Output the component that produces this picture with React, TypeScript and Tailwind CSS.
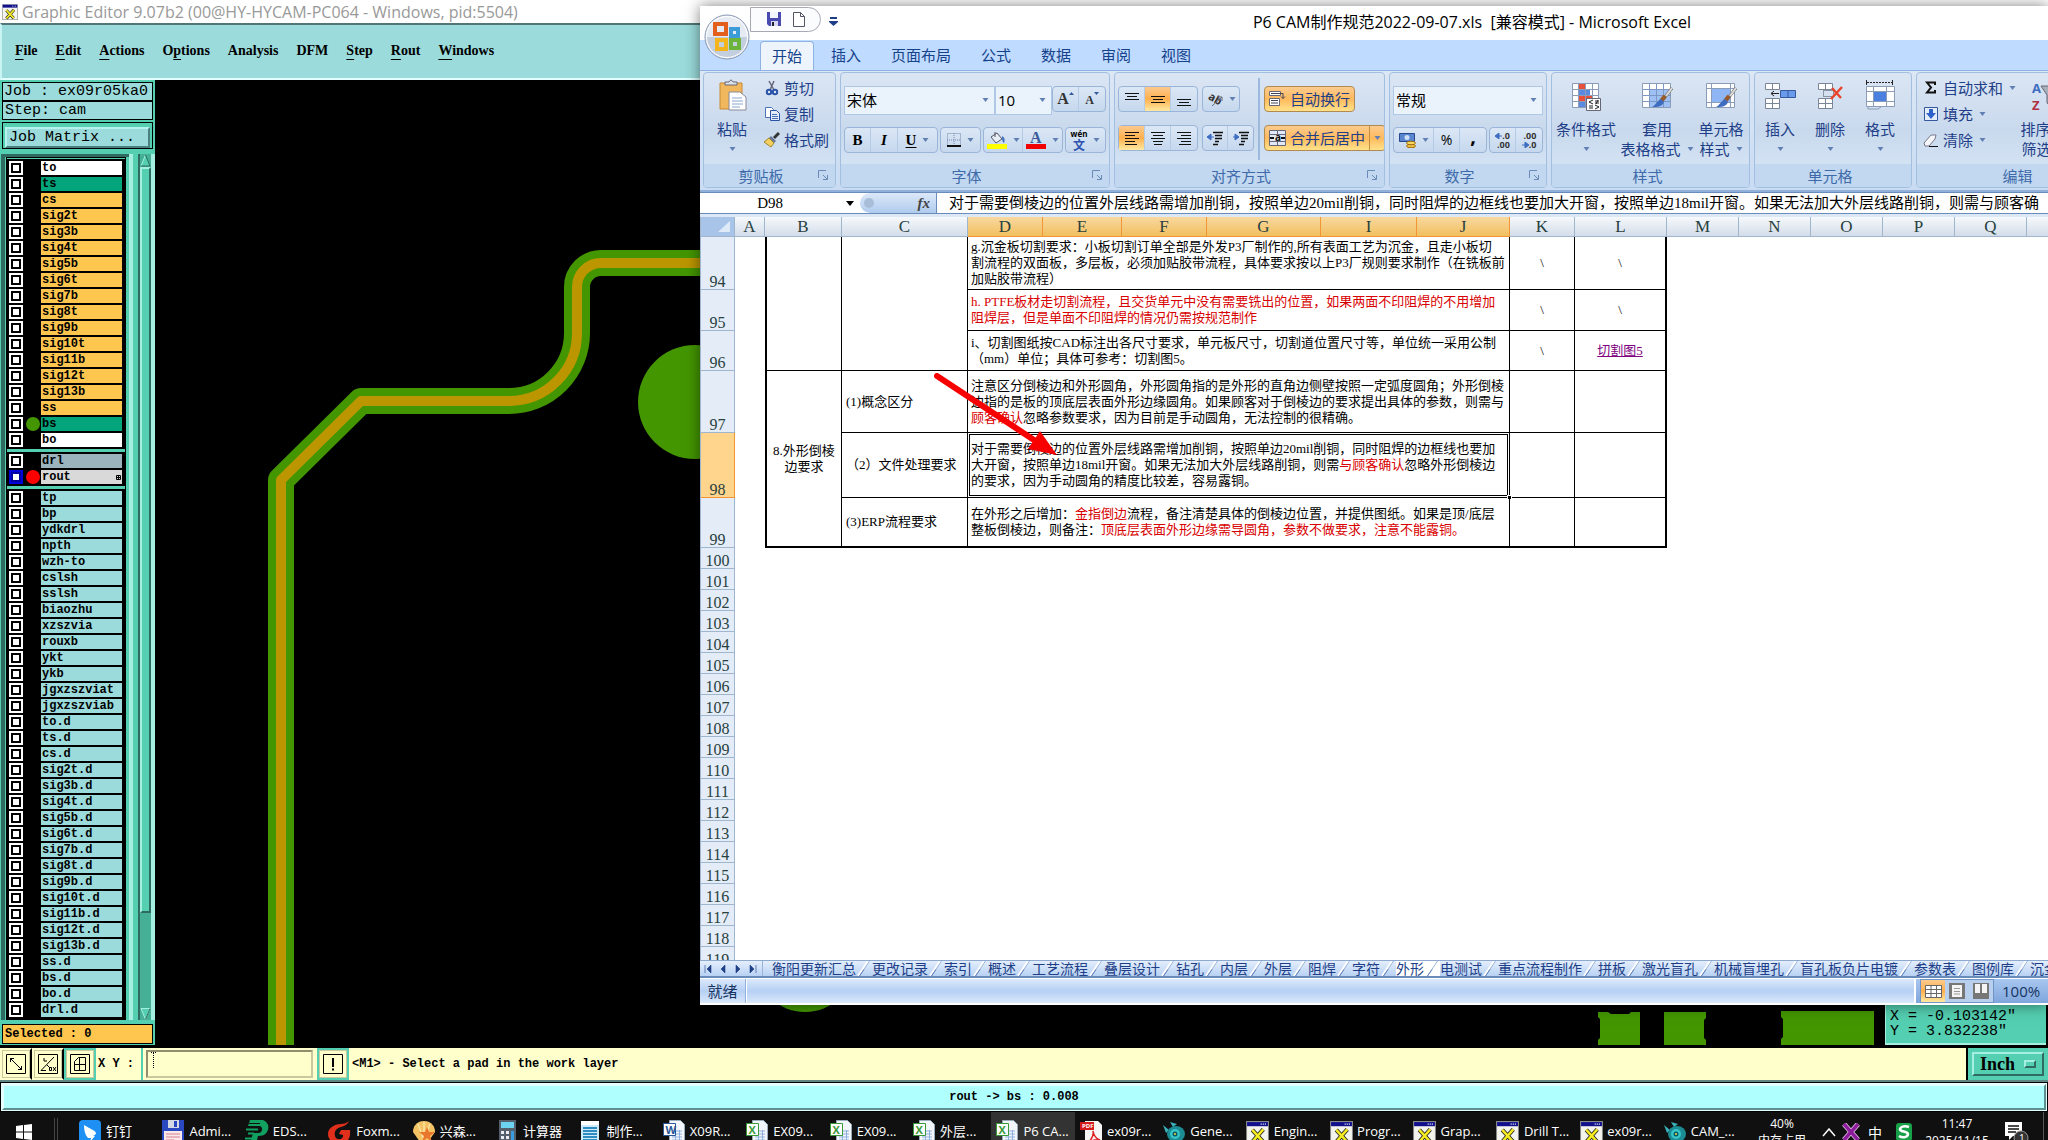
import React from "react";

const UI = "font-['Open_Sans','Noto_Sans_CJK_SC',sans-serif]";
const SONG = "font-['Liberation_Serif','Noto_Sans_CJK_SC',serif]";
const MONO = "font-['Liberation_Mono',monospace]";

/* ---------- layer list ---------- */

const WHITE = "bg-white";
const GREEN = "bg-[#02a47c]";
const ORANGE = "bg-[#ffc64f]";
const CYAN = "bg-[#9bdbdb]";

interface Layer {
    name: string;
    bg: string;
    dot?: string;
    active?: boolean;
}

const layerGroups: Layer[][] = [
    [
        { name: "to", bg: WHITE },
        { name: "ts", bg: GREEN },
        ...["cs", "sig2t", "sig3b", "sig4t", "sig5b", "sig6t", "sig7b", "sig8t", "sig9b", "sig10t", "sig11b", "sig12t", "sig13b", "ss"].map(
            (name) => ({ name, bg: ORANGE })
        ),
        { name: "bs", bg: GREEN, dot: "bg-[#439600]" },
        { name: "bo", bg: WHITE },
    ],
    [
        { name: "drl", bg: "bg-[#9ab3bd]" },
        { name: "rout", bg: "bg-[#d9d9d9]", dot: "bg-[#ff0000]", active: true },
    ],
    [
        "tp", "bp", "ydkdrl", "npth", "wzh-to", "cslsh", "sslsh", "biaozhu", "xzszvia", "rouxb", "ykt", "ykb",
        "jgxzszviat", "jgxzszviab", "to.d", "ts.d", "cs.d", "sig2t.d", "sig3b.d", "sig4t.d", "sig5b.d", "sig6t.d",
        "sig7b.d", "sig8t.d", "sig9b.d", "sig10t.d", "sig11b.d", "sig12t.d", "sig13b.d", "ss.d", "bs.d", "bo.d", "drl.d",
    ].map((name) => ({ name, bg: CYAN })),
];

const LayerRow: React.FC<{ layer: Layer }> = ({ layer }) => (
    <label className="flex h-4 items-center">
        <input
            type="checkbox"
            className={`ml-0.5 h-3.5 w-3.5 shrink-0 appearance-none border-2 bg-white ${
                layer.active ? "border-[#0000d8] shadow-[inset_0_0_0_2px_#00009c]" : "border-white shadow-[inset_0_0_0_2px_#000]"
            }`}
        />
        <span className="flex w-[18px] justify-center pl-0.5">
            {layer.dot && <span className={`h-3.5 w-3.5 shrink-0 rounded-full ${layer.dot}`} />}
        </span>
        <span className={`flex h-3.5 flex-1 mr-[3px] items-center justify-between pl-px text-[12px] leading-[14px] font-bold text-black ${MONO} ${layer.bg}`}>
            {layer.name}
            {layer.active && (
                <svg width="5" height="5" className="mr-px" viewBox="0 0 5 5">
                    <path d="M.5 .5h4v4h-4zM2.5 0v5M0 2.5h5" fill="none" stroke="#000" />
                </svg>
            )}
        </span>
    </label>
);

const SidePanel: React.FC = () => (
    <aside className={`flex w-[155px] shrink-0 flex-col bg-[#54cfb1] pt-0.5 pb-px text-black ${MONO}`}>
        <div className="mx-0.5 h-[19px] border border-black bg-[#9bdbdb] pl-px text-[15px] leading-[18px] whitespace-nowrap">Job : ex09r05ka0</div>
        <div className="mx-0.5 h-[19px] border border-black bg-[#9bdbdb] pl-0.5 text-[15px] leading-[18px]">Step: cam</div>
        <div className="mx-0.5 mt-0.5 h-[27px] border border-black p-0.5">
            <button className="h-full w-full border-2 border-t-[#b5f3ef] border-l-[#b5f3ef] border-r-[#4a8080] border-b-[#4a8080] bg-[#9bdbdb] pl-0.5 text-left text-[15px] leading-[17px]">
                Job Matrix ...
            </button>
        </div>
        <div className="mt-[5px] flex min-h-0 flex-1 border-l border-[#54cfb1]">
            <div className="flex flex-1 border-t-3 border-l-4 border-[#2f6b60]">
                <div className="ml-px flex flex-1 flex-col gap-[3px] border border-black pt-px">
                    {layerGroups.map((group, i) => (
                        <div key={i} className="border-y border-black bg-black">
                            {group.map((layer) => (
                                <LayerRow key={layer.name} layer={layer} />
                            ))}
                        </div>
                    ))}
                </div>
                <div className="w-[3px]" />
            </div>
            <div className="w-[9px] border-l-4 border-[#a5efe0] bg-[#54cfb1]" />
            <div className="flex w-[17px] flex-col border-r-4 border-l-2 border-l-[#2f6b60] border-r-[#a5efe0] bg-[#45b096]">
                <svg width="11" height="13" viewBox="0 0 11 13">
                    <path d="M5.500 1L1 12h9z" fill="#54cfb1" />
                    <path d="M5.500 1L1 12" stroke="#a5efe0" />
                    <path d="M5.500 1L10 12H1" fill="none" stroke="#2f6b60" />
                </svg>
                <div className="h-[746px] border-2 border-t-[#a5efe0] border-l-[#a5efe0] border-b-[#2f6b60] border-r-[#2f6b60] bg-[#54cfb1]" />
                <div className="flex-1" />
                <svg width="11" height="12" viewBox="0 0 11 12">
                    <path d="M1 .5h9L5.500 11.500z" fill="#54cfb1" stroke="#a5efe0" />
                    <path d="M10 .5l-4.500 11" stroke="#2f6b60" />
                </svg>
            </div>
        </div>
        <div className="mx-0.5 mt-1 h-5 border border-black bg-[#ffc64f] pl-0.5 text-[12px] leading-[18px] font-bold">Selected : 0</div>
    </aside>
);

/* ---------- graphic editor ---------- */

const editorMenu = [
    ["", "F", "ile"],
    ["", "E", "dit"],
    ["", "A", "ctions"],
    ["O", "p", "tions"],
    ["Analysis", "", ""],
    ["DFM", "", ""],
    ["", "S", "tep"],
    ["", "R", "out"],
    ["", "W", "indows"],
];

const XLogo: React.FC<{ size: number }> = ({ size }) => (
    <svg width={size} height={size} viewBox="0 0 22 22" className="shrink-0">
        <path d="M.5 .5h21v21H.5z" fill="#f4f4ee" stroke="#888" />
        <path d="M1 1h20v4H1z" fill="#10108c" />
        <path d="M14 3h1M16 3h1M18 3h1" stroke="#fff" />
        <path d="M6 8.500l10 11M16.500 8L6 20" stroke="#222" strokeWidth="4" />
        <path d="M6 8.500l10 11M16.500 8L6 20" stroke="#f4ec20" strokeWidth="2.400" />
    </svg>
);

const Canvas: React.FC = () => (
    <div className="relative min-w-0 flex-1 overflow-hidden bg-black">
        <svg className="block h-full w-full">
            <g transform="translate(-155 -80)">
                <g fill="none" strokeLinejoin="round">
                    <path d="M281 1045V480L361 401H509A68 68 0 0 0 577 333V287A24 24 0 0 1 601 263H760" stroke="#439600" strokeWidth="26" />
                    <path d="M281 1045V480L361 401H509A68 68 0 0 0 577 333V287A24 24 0 0 1 601 263H760" stroke="#bc9600" strokeWidth="10" />
                </g>
                <g fill="#439600">
                    <circle cx="695" cy="402" r="57" />
                    <circle cx="805" cy="962" r="50" />
                    <path d="M1598 1012h10l3 2h18l2-2h9v33h-42v-5l2-2v-19l-2-2z" />
                    <path d="M1664 1012h42v6l-2 2v18l2 2v5h-42z" />
                    <path d="M1781 1011h93v34h-93v-6l2-2v-18l-2-2z" />
                </g>
            </g>
        </svg>
        <div className={`absolute right-0.5 bottom-0 h-16 w-[161px] border-b-2 border-l border-[#a5efe0] bg-[#54cfb1] pt-7 pl-1 text-[15px] leading-[15px] whitespace-pre text-black ${MONO}`}>
            {'X = -0.103142"\nY = 3.832238"'}
        </div>
    </div>
);

const ToolButton: React.FC<{ label: string; teal?: boolean; children: React.ReactNode }> = ({ label, teal, children }) => (
    <button
        aria-label={label}
        className={`flex h-full w-8 shrink-0 items-center justify-center border-2 ${teal ? "border-[#54cfb1]" : "border-[#ffffcc] border-r-black"} bg-[#ffffcc]`}
    >
        <span className="flex border border-[#c9c9a0] p-[3px]">
            <svg width="20" height="20" viewBox="0 0 20 20" fill="none" stroke="#000">
                {children}
            </svg>
        </span>
    </button>
);

const Editor: React.FC = () => (
    <div className="flex min-h-0 flex-1 flex-col">
        <header className={`flex h-[23px] shrink-0 items-center gap-1 bg-white pl-0.5 text-[16px] text-[#999] ${UI}`}>
            <XLogo size={16} />
            <span>Graphic Editor 9.07b2 (00@HY-HYCAM-PC064 - Windows, pid:5504)</span>
        </header>
        <nav className="flex h-[57px] shrink-0 items-center gap-[18px] border-2 border-t-[#527676] border-l-[#c8f4f4] border-b-[#e4ffff] border-r-[#527676] bg-[#9bdbdb] pb-0.5 pl-[13px] font-['Liberation_Serif',serif] text-[14px] font-bold text-black">
            {editorMenu.map(([before, key, after]) => (
                <button key={before + key + after}>
                    {before}
                    <span className="underline underline-offset-4">{key}</span>
                    {after}
                </button>
            ))}
        </nav>
        <div className="flex min-h-0 flex-1">
            <SidePanel />
            <Canvas />
        </div>
        <div className={`flex h-[35px] shrink-0 items-stretch border-t-3 border-black bg-[#ffffcc] text-[12px] font-bold text-black ${MONO}`}>
            <ToolButton label="Snap to point">
                <path d="M.5 .5h19v19H.5zM4.500 4.500l11 11M4.500 8V4.500H8M15.500 12v3.500H12" />
            </ToolButton>
            <ToolButton label="Angle mode">
                <path d="M.5 .5h19v19H.5zM3 16.500L16 3M3 16.500h5M6 4v3h3M9 11l3 3M11.500 13.500h2v3h-2zM18 13l-3 4M15 13l3 4" />
            </ToolButton>
            <ToolButton label="Grid" teal>
                <path d="M.5 .5h19v19H.5zM4.500 7.500l4-4h7v13h-11zM9.500 3.500v13M4.500 10.500h11" />
            </ToolButton>
            <label htmlFor="xy" className="flex w-[47px] items-center border-r-2 border-[#54cfb1] pl-0.5">
                X Y :
            </label>
            <div className="my-0.5 ml-[3px] flex w-[167px] border-2 border-t-[#8f8f70] border-l-[#8f8f70] border-r-[#c9c9a0] border-b-[#c9c9a0]">
                <svg width="6" height="18" viewBox="0 0 6 18" className="ml-0.5">
                    <path d="M1 .5h5M3.500 1v15" stroke="#000" strokeDasharray="1 1" />
                </svg>
                <input id="xy" className="min-w-0 flex-1 outline-none" />
            </div>
            <div className="ml-1 flex">
                <ToolButton label="Alert" teal>
                    <path d="M.5 .5h19v19H.5z" />
                    <path d="M10 4v9M10 14.500v2" strokeWidth="2" />
                </ToolButton>
            </div>
            <span className="flex flex-1 items-center pl-[3px]">&lt;M1&gt; - Select a pad in the work layer</span>
            <div className="border-l-2 border-black bg-[#54cfb1] p-1">
                <button className="flex h-full w-[72px] items-center justify-between border-2 border-t-[#a5efe0] border-l-[#a5efe0] border-r-[#2f6b60] border-b-[#2f6b60] px-1.5 font-['Liberation_Serif',serif] text-[18px] leading-5">
                    Inch
                    <span className="h-2 w-3 border-2 border-t-[#a5efe0] border-l-[#a5efe0] border-r-[#2f6b60] border-b-[#2f6b60]" />
                </button>
            </div>
        </div>
        <div className={`flex h-[32px] shrink-0 flex-col border-t-2 border-[#5f8585] bg-[#e4ffff] p-0.5 text-[12px] font-bold text-black ring-1 ring-black ring-inset ${MONO}`}>
            <div className="flex flex-1 items-center justify-center border-2 border-t-[#e4ffff] border-l-[#e4ffff] border-r-[#5f9090] border-b-[#5f9090] bg-[#b0ffff] pr-5">
                rout -&gt; bs : 0.008
            </div>
        </div>
    </div>
);

/* ---------- ribbon ---------- */

const Caret: React.FC = () => (
    <svg width="7" height="4" viewBox="0 0 7 4" className="shrink-0">
        <path d="M.5 0h6L3.500 4z" fill="#6080b4" />
    </svg>
);

const Launcher: React.FC = () => (
    <svg width="11" height="11" viewBox="0 0 11 11" fill="none" stroke="#6a8ab8">
        <path d="M.5 8V.5H8M5 5l4 4M9.500 5v4.500H5" />
    </svg>
);

const Group: React.FC<{ title: string; width: string; launcher?: boolean; children: React.ReactNode }> = ({ title, width, launcher, children }) => (
    <section className={`flex h-[116px] shrink-0 flex-col overflow-hidden rounded border border-[#a3bfdf] bg-gradient-to-b from-[#dbe6f4] via-[#c9d9ed] to-[#d9e9f8] ${width}`}>
        <div className="min-h-0 flex-1">{children}</div>
        <div className="flex h-[23px] items-center bg-[#c1d8f0] pr-1.5 text-[#3e6aaa]">
            <span className="flex-1 text-center">{title}</span>
            {launcher && (
                <button aria-label={`${title} options`}>
                    <Launcher />
                </button>
            )}
        </div>
    </section>
);

const Strip: React.FC<{ children: React.ReactNode }> = ({ children }) => (
    <div className="flex h-[26px] divide-x divide-[#b4cbe6] rounded-sm border border-[#9ab5d8] bg-gradient-to-b from-[#dbe7f5] to-[#c6d8ee]">{children}</div>
);

const Tool: React.FC<{ label: string; width?: string; on?: boolean; caret?: boolean; children: React.ReactNode }> = ({
    label,
    width = "w-[26px]",
    on,
    caret,
    children,
}) => (
    <button
        aria-label={label}
        className={`flex h-full items-center justify-center gap-1.5 ${width} ${on ? "bg-gradient-to-b from-[#fbc98c] via-[#ffb04b] to-[#ffe9a0]" : ""}`}
    >
        {children}
        {caret && <Caret />}
    </button>
);

const Lines: React.FC<{ rows: [number, number, number][] }> = ({ rows }) => (
    <svg width="16" height="16" viewBox="0 0 16 16" stroke="#111">
        {rows.map(([x1, x2, y]) => (
            <path key={y} d={`M${x1} ${y}.500H${x2}`} />
        ))}
    </svg>
);

const SmallAction: React.FC<{ text: string; caret?: boolean; children: React.ReactNode }> = ({ text, caret, children }) => (
    <button className="flex h-[26px] items-center gap-1 whitespace-nowrap">
        <svg width="16" height="16" viewBox="0 0 16 16" className="shrink-0">
            {children}
        </svg>
        <span>{text}</span>
        {caret && (
            <span className="pl-0.5">
                <Caret />
            </span>
        )}
    </button>
);

const BigAction: React.FC<{ lines: string[]; width: string; children: React.ReactNode }> = ({ lines, width, children }) => (
    <button className={`flex shrink-0 flex-col items-center pt-1.5 whitespace-nowrap ${width}`}>
        <svg width="32" height="32" viewBox="0 0 32 32" className="mb-2">
            {children}
        </svg>
        <span className="leading-5">{lines[0]}</span>
        <span className="flex h-5 items-center gap-1.5 leading-5">
            {lines[1]}
            <Caret />
        </span>
    </button>
);

const Brush: React.FC = () => (
    <g>
        <path d="M31 9l-10 13" stroke="#777" strokeWidth="3" />
        <path d="M31 9l-6 8" stroke="#ddd" strokeWidth="2" />
        <path d="M24 17l-4 5" stroke="#9a5a2a" strokeWidth="4" />
        <path d="M20 20l3 3c-2 5-7 5-12 5 4-2 5-6 9-8z" fill="#3d6cc0" />
    </g>
);

const Combo: React.FC<{ label: string; value: string; width: string }> = ({ label, value, width }) => (
    <div className={`relative ${width}`}>
        <select aria-label={label} className="h-[29px] w-full appearance-none border border-[#b0c8e6] bg-[#eaf2fb] pb-0.5 pl-0.5 text-black">
            <option>{value}</option>
        </select>
        <span className="pointer-events-none absolute top-3 right-1.5 flex">
            <Caret />
        </span>
    </div>
);

const Ribbon: React.FC = () => (
    <div className="flex h-[122px] gap-1 overflow-hidden border-t border-b-2 border-t-[#8db2e3] border-b-[#8fb0da] bg-gradient-to-b from-[#dce7f5] to-[#c9dcf3] pt-px pl-[3px] text-[15px] leading-[18px] text-[#1e3f87]">
        <Group title="剪贴板" width="w-[133px]" launcher>
            <div className="flex gap-2 pl-1">
                <BigAction lines={["粘贴"]} width="w-12">
                    <path d="M4 4h22v26H4z" fill="#f0b75c" stroke="#c98a34" />
                    <path d="M9 6V3h4q2-4 4 0h4v3z" fill="#dde3ea" stroke="#667" />
                    <path d="M13 13h11l6 5v13H13z" fill="#fff" stroke="#889" />
                    <path d="M16 19h10M16 22h11M16 25h11M16 28h8" stroke="#8aa6cf" />
                </BigAction>
                <div className="flex flex-col pt-0.5">
                    <SmallAction text="剪切">
                        <path d="M5 1l5 9M10 1L6 10" stroke="#667" strokeWidth="1.500" />
                        <circle cx="5" cy="12" r="2.200" fill="none" stroke="#2a52a8" strokeWidth="2" />
                        <circle cx="11" cy="12" r="2.200" fill="none" stroke="#2a52a8" strokeWidth="2" />
                    </SmallAction>
                    <SmallAction text="复制">
                        <path d="M1.500 1.500h6l2 2v8h-8z" fill="#fff" stroke="#4a72b8" />
                        <path d="M6.500 4.500h6l3 3v7h-9z" fill="#e4eefb" stroke="#2a52a8" />
                        <path d="M8 8.500h5M8 10.500h6M8 12.500h6" stroke="#4a72b8" />
                    </SmallAction>
                    <SmallAction text="格式刷">
                        <path d="M15 1l-5 5" stroke="#333" strokeWidth="3" />
                        <path d="M7 4l5 5-2 2-5-5z" fill="#667799" />
                        <path d="M5 6l5 5-3 4-7-5z" fill="#f4d060" stroke="#a5852a" />
                    </SmallAction>
                </div>
            </div>
        </Group>

        <Group title="字体" width="w-[270px]" launcher>
            <div className="flex flex-col gap-3 px-[3px] pt-[13px]">
                <div className="flex justify-between">
                    <div className="flex">
                        <Combo label="字体" value="宋体" width="w-[151px]" />
                        <Combo label="字号" value="10" width="w-[57px]" />
                    </div>
                    <Strip>
                        <Tool label="增大字号">
                            <span className="font-['Liberation_Serif',serif] text-[16px] font-bold text-[#333]">A</span>
                            <svg width="5" height="16" className="-ml-1.5" viewBox="0 0 5 16"><path d="M0 4l2.500-3L5 4z" fill="#345a9c" /></svg>
                        </Tool>
                        <Tool label="减小字号">
                            <span className="pt-0.5 font-['Liberation_Serif',serif] text-[12px] font-bold text-[#333]">A</span>
                            <svg width="5" height="16" className="-ml-1.5" viewBox="0 0 5 16"><path d="M0 1h5L2.500 4z" fill="#345a9c" /></svg>
                        </Tool>
                    </Strip>
                </div>
                <div className="flex justify-between font-['Liberation_Serif',serif] text-black">
                    <Strip>
                        <Tool label="加粗"><b>B</b></Tool>
                        <Tool label="倾斜" width="w-[27px]"><i className="font-bold">I</i></Tool>
                        <Tool label="下划线" width="w-[39px]" caret><b className="underline underline-offset-2">U</b></Tool>
                    </Strip>
                    <Strip>
                        <Tool label="边框" width="w-[39px]" caret>
                            <svg width="14" height="14" viewBox="0 0 14 14">
                                <path d="M.5 .5h13v13H.5zM7 0v13M0 7h14" fill="none" stroke="#7788aa" strokeDasharray="1 1" />
                                <path d="M0 13h14" stroke="#111" strokeWidth="2" />
                            </svg>
                        </Tool>
                    </Strip>
                    <Strip>
                        <Tool label="填充颜色" width="w-[39px]" caret>
                            <svg width="20" height="18" viewBox="0 0 20 18">
                                <path d="M4 6l6-4 5 6-6 4z" fill="#e8eef6" stroke="#556" />
                                <path d="M8 6V1" stroke="#556" />
                                <path d="M15 5q4 2 2 7-2-1-2-7z" fill="#3d6cc0" />
                                <path d="M0 13h20v5H0z" fill="#ffff00" />
                            </svg>
                        </Tool>
                        <Tool label="字体颜色" width="w-[39px]" caret>
                            <svg width="20" height="18" viewBox="0 0 20 18">
                                <text x="4" y="12" fontSize="16" fontWeight="bold" fill="#3a5a98">A</text>
                                <path d="M0 13h20v5H0z" fill="#f00000" />
                            </svg>
                        </Tool>
                    </Strip>
                    <Strip>
                        <Tool label="拼音" width="w-[39px]" caret>
                            <span className={`flex flex-col items-center ${UI}`}>
                                <span className="text-[8px] leading-[10px] font-bold">wén</span>
                                <span className="text-[12px] leading-[13px] font-bold text-[#2f52b0]">文</span>
                            </span>
                        </Tool>
                    </Strip>
                </div>
            </div>
        </Group>

        <Group title="对齐方式" width="w-[271px]" launcher>
            <div className="flex gap-1 px-[3px] pt-[13px]">
                <div className="flex flex-col gap-[13px]">
                    <div className="flex gap-1">
                        <Strip>
                            <Tool label="顶端对齐"><Lines rows={[[1, 15, 2], [3, 13, 5], [1, 15, 8]]} /></Tool>
                            <Tool label="垂直居中" on><Lines rows={[[1, 15, 5], [3, 13, 8], [1, 15, 11]]} /></Tool>
                            <Tool label="底端对齐"><Lines rows={[[1, 15, 8], [3, 13, 11], [1, 15, 14]]} /></Tool>
                        </Strip>
                        <Strip>
                            <Tool label="方向" width="w-9" caret>
                                <svg width="16" height="16" viewBox="0 0 16 16">
                                    <text x="1" y="10" fontSize="11" fontWeight="bold" fill="#333" transform="rotate(30 5 8)">ab</text>
                                    <path d="M5 15l10-9M15 6h-4M15 6v4" fill="none" stroke="#667" />
                                </svg>
                            </Tool>
                        </Strip>
                    </div>
                    <div className="flex gap-1">
                        <Strip>
                            <Tool label="左对齐" on><Lines rows={[[1, 15, 2], [1, 11, 5], [1, 15, 8], [1, 11, 11], [1, 13, 14]]} /></Tool>
                            <Tool label="居中"><Lines rows={[[1, 15, 2], [3, 13, 5], [1, 15, 8], [3, 13, 11], [4, 12, 14]]} /></Tool>
                            <Tool label="右对齐"><Lines rows={[[1, 15, 2], [5, 15, 5], [1, 15, 8], [5, 15, 11], [3, 15, 14]]} /></Tool>
                        </Strip>
                        <Strip>
                            <Tool label="减少缩进量" width="w-[25px]">
                                <svg width="16" height="16" viewBox="0 0 16 16" stroke="#111">
                                    <path d="M6 2.500h10M8 5.500h7M8 8.500h7M8 11.500h4M6 14.500h5" strokeWidth="1.500" />
                                    <path d="M0 7l4-3v6zM3 7h4" fill="#3d6cc0" stroke="#3d6cc0" />
                                </svg>
                            </Tool>
                            <Tool label="增加缩进量" width="w-[25px]">
                                <svg width="16" height="16" viewBox="0 0 16 16" stroke="#111">
                                    <path d="M6 2.500h10M8 5.500h7M8 8.500h7M8 11.500h4M6 14.500h5" strokeWidth="1.500" />
                                    <path d="M6 7L2 4v6zM0 7h4" fill="#3d6cc0" stroke="#3d6cc0" />
                                </svg>
                            </Tool>
                        </Strip>
                    </div>
                </div>
                <div className="-mt-2 h-[82px] border-l-2 border-[#9ab9dc]" />
                <div className="flex flex-col items-start gap-[13px]">
                    <button className="flex h-[26px] items-center gap-1 rounded-sm border border-[#b08a50] bg-gradient-to-b from-[#fbcb8e] via-[#ffb95c] to-[#ffe28a] px-1">
                        <svg width="17" height="16" viewBox="0 0 17 16">
                            <path d="M.5 .5h11v4H.5zM.5 7.500h10v7H.5z" fill="#fff" stroke="#667" />
                            <path d="M2 2.500h12v5l-2-2M14 7.500l2-2M2 9.500h7M2 12h7" fill="none" stroke="#445" />
                        </svg>
                        <span>自动换行</span>
                    </button>
                    <button className="flex h-[26px] items-center gap-1 rounded-sm border border-[#b08a50] bg-gradient-to-b from-[#fbcb8e] via-[#ffb95c] to-[#ffe28a] px-1 whitespace-nowrap">
                        <svg width="17" height="16" viewBox="0 0 17 16">
                            <path d="M.5 .5h16v15H.5zM.5 4.500h16M.5 11.500h16M8.500 .5v4M8.500 11.500v4" fill="#dfe9f8" stroke="#667" />
                            <text x="6" y="11" fontSize="10" fontWeight="bold" fill="#111">a</text>
                            <path d="M1 8h4M12 8h4" stroke="#111" strokeWidth="2" />
                        </svg>
                        <span>合并后居中</span>
                        <span className="flex h-full items-center border-l border-[#c09040] pl-1"><Caret /></span>
                    </button>
                </div>
            </div>
        </Group>

        <Group title="数字" width="w-[158px]" launcher>
            <div className="flex flex-col gap-3 px-[3px] pt-[13px]">
                <Combo label="数字格式" value="常规" width="w-full" />
                <div className="flex justify-between text-black">
                    <Strip>
                        <Tool label="会计数字格式" width="w-10" caret>
                            <svg width="17" height="16" viewBox="0 0 17 16">
                                <path d="M.5 1.500h15v8H.5z" fill="#5a86d0" stroke="#27488c" />
                                <circle cx="8" cy="5.500" r="2.500" fill="#cfe0f8" />
                                <ellipse cx="12" cy="14" rx="4.500" ry="1.800" fill="#f0c040" stroke="#9a6a10" />
                                <ellipse cx="12" cy="11" rx="4.500" ry="1.800" fill="#f8d860" stroke="#9a6a10" />
                            </svg>
                        </Tool>
                        <Tool label="百分比"><span className="text-[14px]">%</span></Tool>
                        <Tool label="千位分隔"><b className="pb-2 text-[20px]">,</b></Tool>
                    </Strip>
                    <Strip>
                        <Tool label="增加小数位数">
                            <span className="flex flex-col items-end text-[9px] leading-[9px] font-bold text-[#333]">
                                <span className="flex items-center">
                                    <svg width="7" height="6" viewBox="0 0 7 6"><path d="M0 3l4-3v6zM3 3h4" fill="#3d6cc0" stroke="#3d6cc0" /></svg>
                                    .0
                                </span>
                                <span>.00</span>
                            </span>
                        </Tool>
                        <Tool label="减少小数位数">
                            <span className="flex flex-col items-end text-[9px] leading-[9px] font-bold text-[#333]">
                                <span>.00</span>
                                <span className="flex items-center">
                                    <svg width="7" height="6" viewBox="0 0 7 6"><path d="M7 3L3 0v6zM0 3h4" fill="#3d6cc0" stroke="#3d6cc0" /></svg>
                                    .0
                                </span>
                            </span>
                        </Tool>
                    </Strip>
                </div>
            </div>
        </Group>

        <Group title="样式" width="w-[199px]">
            <div className="flex">
                <BigAction lines={["条件格式"]} width="w-[68px]">
                    <path d="M2.500 4.500h26v24h-26z" fill="#fff" stroke="#8a9cb8" />
                    <path d="M9 5h6v6H9zM9 17h13v5H9z" fill="#e8503c" />
                    <path d="M9 11h11v6H9zM9 22h6v6H9z" fill="#5a8ae0" />
                    <path d="M3 10.500h25M3 16.500h25M3 22.500h25M8.500 5v23M15.500 5v23M22.500 5v23" stroke="#8a9cb8" />
                    <path d="M16.500 19.500h14v12h-14z" fill="#fff" stroke="#667" />
                    <path d="M23 21l-4 2 4 2M19 27h4M25 22h4M25 24h4M28 21l-2 4M25 26l4 2-4 2M19 29h4" fill="none" stroke="#222" />
                </BigAction>
                <BigAction lines={["套用", "表格格式"]} width="w-[74px]">
                    <path d="M1.500 4.500h28v24h-28z" fill="#fff" stroke="#8a9cb8" />
                    <path d="M8 10h21v18H8z" fill="#9ec0f4" />
                    <path d="M2 10.500h27M2 16.500h27M2 22.500h27M8.500 5v23M15.500 5v23M22.500 5v23" stroke="#7d97c4" />
                    <Brush />
                </BigAction>
                <BigAction lines={["单元格", "样式"]} width="w-[54px]">
                    <path d="M1.500 4.500h28v24h-28z" fill="#fff" stroke="#8a9cb8" />
                    <path d="M1 9.500h29M1 23.500h29M6.500 4v24M25.500 4v24" stroke="#8a9cb8" />
                    <path d="M7 10h18v13H7z" fill="#8fb6f4" />
                    <Brush />
                </BigAction>
            </div>
        </Group>

        <Group title="单元格" width="w-[158px]">
            <div className="flex">
                <BigAction lines={["插入"]} width="w-[50px]">
                    <path d="M1.500 4.500h14v6h-14zM1.500 19.500h14v10h-14zM8.500 4.500v6M8.500 19.500v10M1.500 24.500h14" fill="#fff" stroke="#7a8698" />
                    <path d="M16.500 11.500h15v7h-15zM24 11.500v7" fill="#6a9aec" stroke="#34599c" />
                    <path d="M15 14.500H7M10 12l-3 2.500 3 2.500" fill="none" stroke="#222" />
                </BigAction>
                <BigAction lines={["删除"]} width="w-[50px]">
                    <path d="M4.500 4.500h14v6h-14zM4.500 19.500h14v10h-14zM11.500 4.500v6M11.500 19.500v10M4.500 24.500h14" fill="#fff" stroke="#7a8698" />
                    <path d="M9.500 11.500h10v6h-10z" fill="none" stroke="#445" strokeDasharray="1 1" />
                    <path d="M18 9l9 10M28 8L17 20" stroke="#e8452c" strokeWidth="2.500" />
                </BigAction>
                <BigAction lines={["格式"]} width="w-[50px]">
                    <path d="M2.500 7.500h28v20h-28zM9.500 7v20M22.500 7v20M2 12.500h28M2 22.500h28" fill="#fff" stroke="#8a9cb8" />
                    <path d="M10 13h12v9H10z" fill="#4a80e0" />
                    <path d="M2.500 1v5M28.500 1v5" stroke="#222" />
                    <path d="M3 3.500h25" stroke="#222" strokeDasharray="2 1" />
                    <path d="M4 28v2h10l3-2" fill="none" stroke="#8a9cb8" />
                </BigAction>
            </div>
        </Group>

        <Group title="编辑" width="w-[209px]">
            <div className="flex pl-1.5">
                <div className="flex shrink-0 flex-col pt-0.5">
                    <SmallAction text="自动求和" caret>
                        <path d="M12 5V2.500H4l4 5-4 5h8V10" fill="none" stroke="#111" strokeWidth="2" />
                    </SmallAction>
                    <SmallAction text="填充" caret>
                        <path d="M1.500 1.500h13v13h-13z" fill="#e4eefb" stroke="#34599c" />
                        <path d="M6 3h4v4h3l-5 6-5-6h3z" fill="#2f62c8" />
                    </SmallAction>
                    <SmallAction text="清除" caret>
                        <path d="M1 11l7-8h5l-1 4-6 7H2z" fill="#f4f6fa" stroke="#778" />
                        <path d="M6 14.500h9" stroke="#111" />
                    </SmallAction>
                </div>
                <BigAction lines={["排序和", "筛选"]} width="w-[54px]">
                    <text x="5" y="14" fontSize="13" fontWeight="bold" fill="#3d6cc0">A</text>
                    <text x="5" y="31" fontSize="13" fontWeight="bold" fill="#b03040">Z</text>
                    <path d="M14 7h17l-6 9v12l-5-4v-8z" fill="#a8b0bc" stroke="#667" />
                </BigAction>
            </div>
        </Group>
    </div>
);

/* ---------- worksheet ---------- */

const columns = [
    { name: "A", width: 30 },
    { name: "B", width: 77 },
    { name: "C", width: 126 },
    { name: "D", width: 75, sel: true },
    { name: "E", width: 79, sel: true },
    { name: "F", width: 85, sel: true },
    { name: "G", width: 114, sel: true },
    { name: "I", width: 96, sel: true },
    { name: "J", width: 93, sel: true },
    { name: "K", width: 65 },
    { name: "L", width: 92 },
    { name: "M", width: 72 },
    { name: "N", width: 72 },
    { name: "O", width: 72 },
    { name: "P", width: 72 },
    { name: "Q", width: 72 },
    { name: "R", width: 72 },
];

const R: React.FC<{ children: React.ReactNode }> = ({ children }) => <span className="text-[#d80000]">{children}</span>;

interface SheetRow {
    no: number;
    height: string;
    topic?: React.ReactNode;
    body: React.ReactNode;
    k?: string;
    l?: React.ReactNode;
    last?: boolean;
}

const rows: SheetRow[] = [
    {
        no: 94,
        height: "h-[53px]",
        body: (
            <>
                g.沉金板切割要求：小板切割订单全部是外发P3厂制作的,所有表面工艺为沉金，且走小板切<br />
                割流程的双面板，多层板，必须加贴胶带流程，具体要求按以上P3厂规则要求制作（在铣板前<br />
                加贴胶带流程）
            </>
        ),
        k: "\\",
        l: "\\",
    },
    {
        no: 95,
        height: "h-[41px]",
        body: (
            <R>
                h. PTFE板材走切割流程，且交货单元中没有需要铣出的位置，如果两面不印阻焊的不用增加<br />
                阻焊层，但是单面不印阻焊的情况仍需按规范制作
            </R>
        ),
        k: "\\",
        l: "\\",
    },
    {
        no: 96,
        height: "h-[40px]",
        body: (
            <>
                i、切割图纸按CAD标注出各尺寸要求，单元板尺寸，切割道位置尺寸等，单位统一采用公制<br />
                （mm）单位；具体可参考：切割图5。
            </>
        ),
        k: "\\",
        l: <a href="#fig5" className="text-[#800080] underline">切割图5</a>,
    },
    {
        no: 97,
        height: "h-[62px]",
        topic: "(1)概念区分",
        body: (
            <>
                注意区分倒棱边和外形圆角，外形圆角指的是外形的直角边侧壁按照一定弧度圆角；外形倒棱<br />
                边指的是板的顶底层表面外形边缘圆角。如果顾客对于倒棱边的要求提出具体的参数，则需与<br />
                <R>顾客确认</R>忽略参数要求，因为目前是手动圆角，无法控制的很精确。
            </>
        ),
    },
    {
        no: 98,
        height: "h-[65px]",
        topic: "（2）文件处理要求",
        body: (
            <>
                对于需要倒棱边的位置外层线路需增加削铜，按照单边20mil削铜，同时阻焊的边框线也要加<br />
                大开窗，按照单边18mil开窗。如果无法加大外层线路削铜，则需<R>与顾客确认</R>忽略外形倒棱边<br />
                的要求，因为手动圆角的精度比较差，容易露铜。
            </>
        ),
    },
    {
        no: 99,
        height: "h-[50px]",
        topic: "(3)ERP流程要求",
        last: true,
        body: (
            <>
                在外形之后增加：<R>金指倒边</R>流程，备注清楚具体的倒棱边位置，并提供图纸。如果是顶/底层<br />
                整板倒棱边，则备注：<R>顶底层表面外形边缘需导圆角，参数不做要求，注意不能露铜。</R>
            </>
        ),
    },
];

const emptyRows = Array.from({ length: 20 }, (_, i) => 100 + i);

const RowHead: React.FC<{ no: number; height: string }> = ({ no, height }) => (
    <th
        className={`border-r border-b p-0 align-bottom text-[16px] leading-[14px] font-normal text-[#27413e] ${height} ${
            no === 98 ? "border-[#f29536] bg-[#ffd58d]" : "border-[#9eb6ce] bg-[#e4ecf7]"
        }`}
    >
        {no}
    </th>
);

const Sheet: React.FC = () => (
    <div className="relative min-h-0 flex-1 overflow-hidden bg-white">
        <table className={`w-[1398px] table-fixed border-separate border-spacing-0 text-[13px] leading-4 text-black ${SONG}`}>
            <colgroup>
                <col style={{ width: 34 }} />
                {columns.map((c) => (
                    <col key={c.name} style={{ width: c.width }} />
                ))}
            </colgroup>
            <thead>
                <tr className="text-[17px] leading-[18px] text-[#27413e]">
                    <th className="h-5 border-r border-b border-[#9eb6ce] bg-[#a9c4e9]">
                        <svg width="12" height="11" viewBox="0 0 12 11" className="mr-1 ml-auto">
                            <path d="M12 0v11H0z" fill="#dfeaf8" />
                        </svg>
                    </th>
                    {columns.map((c) => (
                        <th
                            key={c.name}
                            className={`h-5 border-r border-b p-0 font-normal ${
                                c.sel
                                    ? "border-[#f29536] bg-gradient-to-b from-[#f9d99f] to-[#f1bf5d]"
                                    : "border-[#9eb6ce] bg-gradient-to-b from-[#f6f9fc] to-[#d3dce9]"
                            }`}
                        >
                            {c.name}
                        </th>
                    ))}
                </tr>
            </thead>
            <tbody>
                {rows.map((row) => {
                    const edge = row.last ? "border-b-2" : "border-b";
                    return (
                        <tr key={row.no}>
                            <RowHead no={row.no} height={row.height} />
                            {row.no === 94 && (
                                <>
                                    <td rowSpan={6} />
                                    <td rowSpan={3} className="border-r border-b border-l-2 border-black" />
                                    <td rowSpan={3} className="border-r border-b border-black" />
                                </>
                            )}
                            {row.no === 97 && (
                                <td rowSpan={3} className="border-r border-b-2 border-l-2 border-black text-center">
                                    8.外形倒棱<br />边要求
                                </td>
                            )}
                            {row.topic && <td className={`border-r border-black pl-1 whitespace-nowrap ${edge}`}>{row.topic}</td>}
                            <td colSpan={6} className={`relative border-r border-black pl-[3px] whitespace-nowrap ${edge}`}>
                                {row.body}
                                {row.no === 98 && (
                                    <>
                                        <span className="absolute inset-px border border-black" />
                                        <span className="absolute -right-[3px] -bottom-[3px] h-[5px] w-[5px] border border-white bg-black" />
                                    </>
                                )}
                            </td>
                            <td className={`border-r border-black text-center ${edge}`}>{row.k}</td>
                            <td className={`border-r-2 border-black text-center ${edge}`}>{row.l}</td>
                            <td colSpan={6} />
                        </tr>
                    );
                })}
                {emptyRows.map((no) => (
                    <tr key={no}>
                        <RowHead no={no} height="h-[21px]" />
                        <td colSpan={17} />
                    </tr>
                ))}
            </tbody>
        </table>
        {/* callout arrow drawn over the cells */}
        <svg className="absolute top-[156px] left-[233px]" width="126" height="86" viewBox="0 0 126 86">
            <path d="M3 3l100 66" stroke="#f80000" strokeWidth="6" strokeLinecap="round" />
            <path d="M106 58l17 24-29-6z" fill="#f80000" />
        </svg>
    </div>
);

const sheetTabs = [
    "衡阳更新汇总", "更改记录", "索引", "概述", "工艺流程", "叠层设计", "钻孔", "内层", "外层", "阻焊", "字符", "外形",
    "电测试", "重点流程制作", "拼板", "激光盲孔", "机械盲埋孔", "盲孔板负片电镀", "参数表", "图例库", "沉金",
];

const SheetTabs: React.FC = () => (
    <div className="flex h-[18px] shrink-0 overflow-hidden border-t border-b-2 border-t-[#8da9d0] border-b-[#6a8cba] bg-gradient-to-b from-[#e4eefc] to-[#b8d2f4]">
        <div className="flex w-[63px] shrink-0 items-center justify-around border-r border-[#9ab5d8] pr-0.5">
            {["M1 0v8M7 0L3 4l4 4z", "M6 0L2 4l4 4z", "M2 0l4 4-4 4z", "M7 0v8M1 0l4 4-4 4z"].map((d, i) => (
                <button key={d} aria-label={["第一张", "上一张", "下一张", "最后一张"][i]}>
                    <svg width="8" height="8" viewBox="0 0 8 8">
                        <path d={d} fill="#1f3f86" stroke="#1f3f86" strokeWidth=".6" />
                    </svg>
                </button>
            ))}
        </div>
        <div className="flex pl-[9px]">
            {sheetTabs.map((tab) => (
                <button
                    key={tab}
                    className={`flex shrink-0 items-center text-[14px] leading-[14px] whitespace-nowrap text-[#1e3f87] ${tab === "外形" ? "bg-white" : ""}`}
                >
                    {tab}
                    <svg width="16" height="15" viewBox="0 0 16 15" fill="none">
                        <path d="M2 15L12 0" stroke="#fff" strokeWidth="2" />
                        <path d="M3.500 15L13.500 0" stroke="#9cb6dc" />
                        <path d="M3.500 15L8 8.500" stroke="#5f80b4" />
                    </svg>
                </button>
            ))}
        </div>
    </div>
);

const ExcelStatus: React.FC = () => (
    <footer className="flex h-[27px] shrink-0 items-stretch border-t border-b-2 border-white bg-gradient-to-b from-[#dce9fb] via-[#b6d0f4] to-[#dae8fb] text-[15px] leading-6 text-[#16345f]">
        <span className="flex w-[46px] items-center justify-center border-r border-[#8fb0dc]">就绪</span>
        <span className="flex-1 border-l border-white" />
        <div className="flex w-[134px] items-center gap-2 border-l-2 border-white bg-gradient-to-b from-[#a9c7f0] to-[#7fa6dc] pl-1">
            <div className="flex h-6 border border-[#6f94c8] bg-[#b8cfee]">
                <Tool label="普通" width="w-6" on>
                    <svg width="17" height="13" viewBox="0 0 17 13"><path d="M.5 .5h16v12H.5zM6 0v13M11.500 0v13M0 4.500h17M0 8.500h17" fill="#fff" stroke="#666" /></svg>
                </Tool>
                <Tool label="页面布局" width="w-6">
                    <svg width="16" height="16" viewBox="0 0 16 16"><path d="M0 0h16v16H0z" fill="#777" /><path d="M3 2h10v12H3z" fill="#f4f4f4" /><path d="M5 5.500h6M5 8.500h6M5 11h6" stroke="#999" /></svg>
                </Tool>
                <Tool label="分页预览" width="w-6">
                    <svg width="16" height="16" viewBox="0 0 16 16"><path d="M0 0h16v16H0z" fill="#777" /><path d="M2 1h5v9H2zM9 1h5v9H9z" fill="#f4f4f4" /></svg>
                </Tool>
            </div>
            <span>100%</span>
        </div>
    </footer>
);

const Excel: React.FC = () => (
    <div className={`absolute top-[6px] right-0 left-[700px] flex h-[999px] flex-col overflow-hidden bg-white shadow-[0_0_14px_rgba(0,0,0,0.5)] ${UI}`}>
        <div className="relative flex h-[34px] shrink-0 items-center text-[16px] text-black">
            <div className="mb-2 ml-[50px] flex h-[25px] w-[71px] items-center gap-3 rounded-r-full border border-[#a8a8b4] bg-[#fbfcfe] pl-4">
                <button aria-label="保存">
                    <svg width="14" height="14" viewBox="0 0 14 14"><path d="M0 0h14v14H2l-2-2z" fill="#4a4ab0" /><path d="M3 0h8v6H3z" fill="#f4f6ff" /><path d="M4 9h7v5H4z" fill="#d4d8f0" /><path d="M5 10h2v4H5z" fill="#223" /></svg>
                </button>
                <button aria-label="新建">
                    <svg width="12" height="15" viewBox="0 0 12 15"><path d="M.5 .5h7l4 4v10H.5zM7.500 .5v4h4" fill="#fff" stroke="#556" /></svg>
                </button>
            </div>
            <button aria-label="自定义快速访问工具栏" className="mb-1 ml-2">
                <svg width="9" height="9" viewBox="0 0 9 9"><path d="M1 1h7" stroke="#1e3f87" strokeWidth="2" /><path d="M0 4h9v1L4.500 9 0 5z" fill="#1e3f87" /></svg>
            </button>
            <h1 className="flex-1 pb-0.5 pl-[58px] text-center whitespace-pre">P6 CAM制作规范2022-09-07.xls  [兼容模式] - Microsoft Excel</h1>
            <button aria-label="Office" className="absolute top-2 left-1 z-10">
                <svg width="46" height="46" viewBox="0 0 46 46">
                    <circle cx="23" cy="23" r="22" fill="#e6ebf3" stroke="#8a99b4" />
                    <path d="M2 23a21 21 0 0 0 42 0z" fill="#c3cede" />
                    <circle cx="23" cy="23" r="20.500" fill="none" stroke="#fff" />
                    <g fill="none" strokeWidth="4">
                        <path d="M11 10h11v10H11z" stroke="#e2601c" />
                        <path d="M27 15h7v7h-7z" stroke="#3c9cd8" />
                        <path d="M13 26h9v9h-9z" stroke="#f4b41c" />
                        <path d="M27 26h8v8h-8z" stroke="#6cb43c" />
                    </g>
                </svg>
            </button>
        </div>
        <div className="flex h-[30px] shrink-0 items-end bg-[#bfdbff] pl-[60px] text-[15px] text-[#15428b]">
            <button className="mr-[17px] h-[29px] w-[54px] rounded-t border border-b-0 border-[#8db2e3] bg-[#eef4fc]">开始</button>
            <div className="flex h-[29px] gap-[30px]">
                {["插入", "页面布局", "公式", "数据", "审阅", "视图"].map((t) => (
                    <button key={t}>{t}</button>
                ))}
            </div>
        </div>
        <Ribbon />
        <div className="flex h-[22px] shrink-0 items-center border-y border-[#6a8cba] bg-white text-[15px] text-black">
            <div className={`flex w-[160px] items-center justify-end gap-[63px] pr-1.5 ${SONG}`}>
                <span>D98</span>
                <svg width="8" height="5" viewBox="0 0 8 5"><path d="M0 0h8L4 5z" fill="#000" /></svg>
            </div>
            <div className="flex h-full w-[77px] items-center justify-between rounded-l-full border-r border-[#6a8cba] bg-gradient-to-b from-[#dce8f8] to-[#b0cbee] pr-1.5 pl-1">
                <span className="h-2.5 w-2.5 rounded-full bg-[#a8bdd8]" />
                <i className="font-['Liberation_Serif',serif] text-[15px] font-bold text-[#444]">fx</i>
            </div>
            <div className={`flex-1 overflow-hidden pl-3 whitespace-nowrap ${SONG}`}>
                对于需要倒棱边的位置外层线路需增加削铜，按照单边20mil削铜，同时阻焊的边框线也要加大开窗，按照单边18mil开窗。如果无法加大外层线路削铜，则需与顾客确
            </div>
        </div>
        <div className="h-[3px] shrink-0 bg-[#dce8f6]" />
        <div className="flex min-h-0 flex-1 border-l border-[#9eb6ce]">
            <Sheet />
        </div>
        <SheetTabs />
        <ExcelStatus />
    </div>
);

/* ---------- taskbar ---------- */

const DocIcon: React.FC<{ letter: string; color: string }> = ({ letter, color }) => (
    <svg width="22" height="24" viewBox="0 0 22 24" className="shrink-0">
        <path d="M6.500 .5h11l4 4v19h-15z" fill="#f2f6fb" stroke="#9ab" />
        <path d="M9 11h10M9 14h10M9 17h10M9 20h10M12.500 10v12M16.500 10v12" stroke="#8fb0dc" />
        <path d="M.5 3.500h12v12H.5z" fill="#fff" stroke={color} />
        <text x="2.500" y="14" fontSize="11" fontWeight="bold" fill={color}>{letter}</text>
    </svg>
);

const TeapotIcon: React.FC = () => (
    <svg width="24" height="24" viewBox="0 0 24 24" className="shrink-0">
        <path d="M1 5l6 5-3 3zM8 2l7 2-4 3z" fill="#3ab0b8" />
        <ellipse cx="14" cy="14" rx="9" ry="8" fill="#1c8c94" />
        <circle cx="13" cy="14" r="5" fill="#35c4c8" />
        <circle cx="13" cy="14" r="2.500" fill="#0b5a66" />
        <circle cx="13" cy="14" r="1" fill="#f0d840" />
    </svg>
);

const tasks: { text: string; icon: React.ReactNode; active?: boolean }[] = [
    {
        text: "钉钉",
        icon: (
            <svg width="22" height="24" viewBox="0 0 22 24" className="shrink-0">
                <rect width="22" height="24" rx="4" fill="#1e90f4" />
                <path d="M5 5c6 4 11 5 12 8 0 2-3 3-3 3h2l-5 6 1-4H9c-3-3-4-8-4-13z" fill="#fff" />
            </svg>
        ),
    },
    {
        text: "Admi...",
        icon: (
            <svg width="22" height="24" viewBox="0 0 22 24" className="shrink-0">
                <path d="M0 0h22v24H0z" fill="#2a48c0" />
                <path d="M6 0h11v8H6z" fill="#d4dae4" />
                <path d="M12 1h3v6h-3z" fill="#2a48c0" />
                <path d="M2 11h18v13H2z" fill="#f8e8ea" />
                <path d="M4 14h14M4 17h14M4 20h8" stroke="#d88090" />
            </svg>
        ),
    },
    {
        text: "EDS...",
        icon: (
            <svg width="24" height="24" viewBox="0 0 24 24" className="shrink-0">
                <path d="M5 0h13c5 2 7 7 4 12-2 3-5 4-9 4l-2 8H5l3-11h6c4-1 4-6 1-7H3z" fill="#12a060" />
                <path d="M1 9.500h12M3 13.500h6M0 18.500h7" stroke="#12a060" strokeWidth="2" />
                <path d="M4 3.500h11" stroke="#101010" />
            </svg>
        ),
    },
    {
        text: "Foxm...",
        icon: (
            <svg width="24" height="24" viewBox="0 0 24 24" className="shrink-0">
                <path d="M21 1c-1 3-4 5-8 6-5 1-7 5-6 9 1 5 9 4 8-1l-4-1 2-4h9c1 8-3 14-10 14C4 24 0 19 0 14 0 7 8 4 13 4c3 0 6-1 8-3z" fill="#e0301c" />
            </svg>
        ),
    },
    {
        text: "兴森...",
        icon: (
            <svg width="24" height="24" viewBox="0 0 24 24" className="shrink-0">
                <path d="M12 1c8 0 11 6 11 11l-7 10H8L1 12C1 7 4 1 12 1z" fill="#f4c464" />
                <path d="M12 2v18M6 4l6 16M18 4l-6 16" stroke="#fff0c0" />
                <path d="M15 7l2 5h6l-5 4 2 6-5-4-5 4 2-6-5-4h6z" fill="#e8762c" />
            </svg>
        ),
    },
    {
        text: "计算器",
        icon: (
            <svg width="22" height="24" viewBox="0 0 22 24" className="shrink-0">
                <path d="M3 0h17v24H3z" fill="#56606c" />
                <path d="M5 2h13v6H5z" fill="#6cd4f0" />
                <path d="M5 11h3v3H5zM10 11h3v3h-3zM5 16h3v3H5zM10 16h3v3h-3zM5 21h3v3H5zM10 21h3v3h-3z" fill="#e8ecf0" />
                <path d="M15 11h3v13h-3z" fill="#3a9ce0" />
            </svg>
        ),
    },
    {
        text: "制作...",
        icon: (
            <svg width="22" height="24" viewBox="0 0 22 24" className="shrink-0">
                <path d="M2 1h18v23H2z" fill="#cfeafa" />
                <path d="M2 1h18v4H2z" fill="#fff" />
                <path d="M4 8h14M4 11h14M4 14h14M4 17h14M4 20h14" stroke="#2f8cc0" strokeWidth="2" />
            </svg>
        ),
    },
    { text: "X09R...", icon: <DocIcon letter="W" color="#2b579a" /> },
    { text: "EX09...", icon: <DocIcon letter="X" color="#3a9a3a" /> },
    { text: "EX09...", icon: <DocIcon letter="X" color="#3a9a3a" /> },
    { text: "外层...", icon: <DocIcon letter="X" color="#3a9a3a" /> },
    { text: "P6 CA...", icon: <DocIcon letter="X" color="#3a9a3a" />, active: true },
    {
        text: "ex09r...",
        icon: (
            <svg width="22" height="24" viewBox="0 0 22 24" className="shrink-0">
                <path d="M5 1h13l4 4v19H5z" fill="#f6f6f6" />
                <path d="M0 2h14v8H0z" fill="#d41a1a" />
                <text x="2" y="8" fontSize="6" fontWeight="bold" fill="#fff">PDF</text>
                <path d="M8 23c4-4 6-8 5-12 1 6 4 8 7 9-5-1-8 0-12 3z" fill="none" stroke="#e02020" strokeWidth="1.500" />
            </svg>
        ),
    },
    { text: "Gene...", icon: <TeapotIcon /> },
    { text: "Engin...", icon: <XLogo size={23} /> },
    { text: "Progr...", icon: <XLogo size={23} /> },
    { text: "Grap...", icon: <XLogo size={23} /> },
    { text: "Drill T...", icon: <XLogo size={23} /> },
    { text: "ex09r...", icon: <XLogo size={23} /> },
    { text: "CAM_...", icon: <TeapotIcon /> },
];

const Taskbar: React.FC = () => (
    <footer className={`flex h-7 shrink-0 overflow-hidden bg-[#101010] text-[13px] text-white ${UI}`}>
        <div className="flex h-10 w-[74px] shrink-0 items-center gap-[22px] pl-4">
            <button aria-label="Start">
                <svg width="16" height="16" viewBox="0 0 16 16" fill="#fff">
                    <path d="M0 2l7-1v6.500H0zM8 1l8-1v7.500H8zM0 8.500h7V15l-7-1zM8 8.500h8V16l-8-1z" />
                </svg>
            </button>
            <span className="h-7 w-1 border-x border-[#444]" />
        </div>
        <div className="flex h-10 min-w-0 flex-1">
            {tasks.map((task, i) => (
                <button key={i} className={`flex min-w-0 flex-1 basis-0 items-center gap-1 pl-1 whitespace-nowrap ${task.active ? "bg-[#333]" : ""}`}>
                    <span className="flex w-6 shrink-0 justify-center">{task.icon}</span>
                    {task.text}
                </button>
            ))}
        </div>
        <div className="flex h-10 w-[306px] shrink-0 items-center leading-[17px]">
            <div className="ml-3 flex w-[56px] flex-col items-center text-[12px] whitespace-nowrap">
                <span>40%</span>
                <span>内存占用</span>
            </div>
            <svg width="14" height="9" viewBox="0 0 14 9" className="ml-3"><path d="M1 8l6-7 6 7" fill="none" stroke="#fff" strokeWidth="1.500" /></svg>
            <svg width="18" height="18" viewBox="0 0 18 18" className="ml-1.5"><path d="M2 1l14 16M16 1L2 17" stroke="#e8c8ec" strokeWidth="5" /><path d="M2 1l14 16M16 1L2 17" stroke="#8c1c9c" strokeWidth="3.500" /></svg>
            <span className="ml-2 text-[14px]">中</span>
            <svg width="17" height="18" viewBox="0 0 17 18" className="ml-3.5"><rect width="16" height="18" rx="3" fill="#18a048" /><path d="M13 4C8 2 4 4 4 6.500c1 3 8 1 8 5C11 15 6 15 3 13" fill="none" stroke="#fff" strokeWidth="2.500" /></svg>
            <div className="ml-2.5 flex w-[68px] flex-col items-center text-[12px]">
                <span>11:47</span>
                <span>2025/11/15</span>
            </div>
            <div className="flex-1" />
            <svg width="24" height="22" viewBox="0 0 24 22" className="mr-3.5">
                <path d="M0 1h17v14H8l-4 4v-4H0z" fill="#fff" />
                <path d="M3 5h11M3 8h11M3 11h8" stroke="#101010" strokeWidth="1.500" />
                <circle cx="16" cy="17" r="7" fill="#333" stroke="#999" />
                <text x="14" y="21" fontSize="10" fill="#fff">1</text>
            </svg>
            <div className="mr-1 h-full border-l border-[#555]" />
        </div>
    </footer>
);

export default function App() {
    return (
        <div className="relative flex h-screen flex-col overflow-hidden bg-black">
            <Editor />
            <Taskbar />
            <Excel />
        </div>
    );
}
